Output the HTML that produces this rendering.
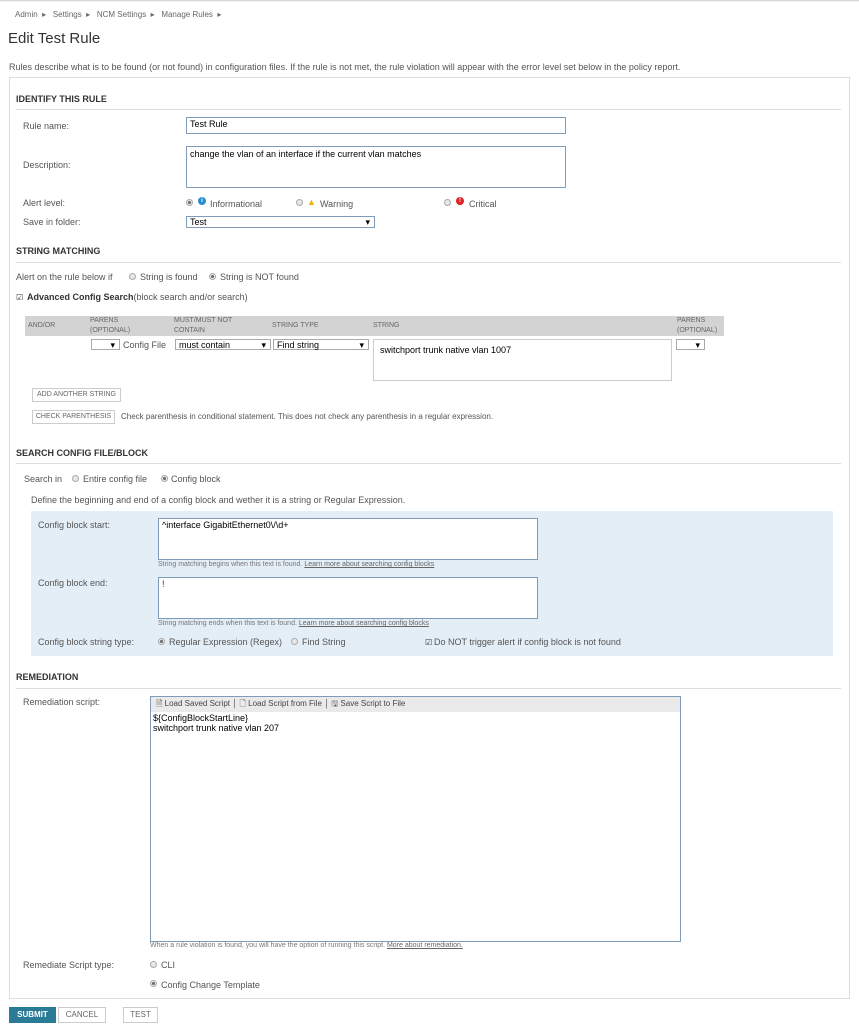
<!DOCTYPE html>
<html><head><meta charset="utf-8"><style>
*{margin:0;padding:0;box-sizing:border-box}
body{width:859px;height:1036px;background:#fff;position:relative;overflow:hidden;font-family:"Liberation Sans",sans-serif;color:#555;font-size:9px}
.a{position:absolute;white-space:nowrap;line-height:12px}
.h{font-weight:bold;color:#333;font-size:9px}
.ln{position:absolute;height:1px;background:#ddd;left:16px;width:825px}
.in{position:absolute;border:1px solid #7f9db9;background:#fff;color:#000;font-size:9px;padding:1px 3px;line-height:11px}
.ta{position:absolute;border:1px solid #ccc;background:#fff;color:#000;font-size:9px;padding:5px 6px}
.sel{position:absolute;border:1px solid #aaa;background:#fff;color:#000;font-size:9px;line-height:10px;padding:0 3px}
.sel:after{content:"▾";position:absolute;right:4px;top:0;font-size:9px;color:#000}
.r{position:absolute;width:7px;height:7px;border-radius:50%;border:1px solid #aaa;background:#e8e8e8}
.r.on:after{content:"";position:absolute;left:1px;top:1px;width:3px;height:3px;border-radius:50%;background:#666}
.btn{position:absolute;border:1px solid #ccc;background:#fff;color:#666;font-size:7px;text-align:center;line-height:12px}
.hint{font-size:7px;color:#777}
.hint u{color:#666}
</style></head><body>
<div style="position:absolute;left:0;top:0;width:859px;height:2px;background:linear-gradient(#ccc,#fff)"></div>
<div class="a" style="left:15px;top:9px;font-size:8px;color:#666">Admin &nbsp;▸ &nbsp;&nbsp;Settings &nbsp;▸ &nbsp;&nbsp;NCM Settings &nbsp;▸ &nbsp;&nbsp;Manage Rules &nbsp;▸</div>
<div class="a" style="left:8px;top:30px;font-size:15px;line-height:18px;color:#333">Edit Test Rule</div>
<div class="a" style="left:9px;top:61px">Rules describe what is to be found (or not found) in configuration files. If the rule is not met, the rule violation will appear with the error level set below in the policy report.</div>
<div style="position:absolute;left:9px;top:77px;width:841px;height:922px;border:1px solid #ddd"></div>

<div class="a h" style="left:16px;top:93px">IDENTIFY THIS RULE</div>
<div class="ln" style="top:109px"></div>
<div class="a" style="left:23px;top:120px">Rule name:</div>
<div class="in" style="left:186px;top:117px;width:380px;height:17px">Test Rule</div>
<div class="a" style="left:23px;top:159px">Description:</div>
<div class="in" style="left:186px;top:146px;width:380px;height:42px;padding:2px 3px">change the vlan of an interface if the current vlan matches</div>
<div class="a" style="left:23px;top:197px">Alert level:</div>
<div class="r on" style="left:186px;top:199px"></div>
<div style="position:absolute;left:198px;top:197px;width:8px;height:8px;border-radius:50%;background:#2a8fd0;color:#fff;font-size:6px;text-align:center;line-height:8px;font-weight:bold">i</div>
<div class="a" style="left:210px;top:198px">Informational</div>
<div class="r" style="left:296px;top:199px"></div>
<div class="a" style="left:307px;top:196px;color:#e8b400;font-size:9px">▲</div>
<div class="a" style="left:320px;top:198px">Warning</div>
<div class="r" style="left:444px;top:199px"></div>
<div style="position:absolute;left:456px;top:197px;width:8px;height:8px;border-radius:50%;background:#d22;color:#fff;font-size:6px;text-align:center;line-height:8px;font-weight:bold">!</div>
<div class="a" style="left:469px;top:198px">Critical</div>
<div class="a" style="left:23px;top:216px">Save in folder:</div>
<div class="sel" style="left:186px;top:216px;width:189px;height:12px;border-color:#7f9db9;line-height:10px">Test</div>

<div class="a h" style="left:16px;top:245px">STRING MATCHING</div>
<div class="ln" style="top:262px"></div>
<div class="a" style="left:16px;top:271px">Alert on the rule below if</div>
<div class="r" style="left:129px;top:273px"></div>
<div class="a" style="left:140px;top:271px">String is found</div>
<div class="r on" style="left:209px;top:273px"></div>
<div class="a" style="left:220px;top:271px">String is NOT found</div>
<div class="a" style="left:16px;top:292px;font-size:8px;color:#333">☑</div>
<div class="a" style="left:27px;top:291px"><b style="color:#333">Advanced Config Search</b>(block search and/or search)</div>

<div style="position:absolute;left:25px;top:316px;width:699px;height:20px;background:#d3d3d3"></div>
<div class="a" style="left:28px;top:320px;font-size:7px;color:#666">AND/OR</div>
<div class="a" style="left:90px;top:316px;font-size:7px;color:#666;line-height:10px">PARENS<br>(OPTIONAL)</div>
<div class="a" style="left:174px;top:316px;font-size:7px;color:#666;line-height:10px">MUST/MUST NOT<br>CONTAIN</div>
<div class="a" style="left:272px;top:320px;font-size:7px;color:#666">STRING TYPE</div>
<div class="a" style="left:373px;top:320px;font-size:7px;color:#666">STRING</div>
<div class="a" style="left:677px;top:316px;font-size:7px;color:#666;line-height:10px">PARENS<br>(OPTIONAL)</div>
<div class="sel" style="left:91px;top:339px;width:29px;height:11px"></div>
<div class="a" style="left:123px;top:339px">Config File</div>
<div class="sel" style="left:175px;top:339px;width:96px;height:11px">must contain</div>
<div class="sel" style="left:273px;top:339px;width:96px;height:11px">Find string</div>
<div class="ta" style="left:373px;top:339px;width:299px;height:42px">switchport trunk native vlan 1007</div>
<div class="sel" style="left:676px;top:339px;width:29px;height:11px"></div>
<div class="btn" style="left:32px;top:388px;width:89px;height:14px">ADD ANOTHER STRING</div>
<div class="btn" style="left:32px;top:410px;width:83px;height:14px">CHECK PARENTHESIS</div>
<div class="a" style="left:121px;top:411px;font-size:8px">Check parenthesis in conditional statement. This does not check any parenthesis in a regular expression.</div>

<div class="a h" style="left:16px;top:447px">SEARCH CONFIG FILE/BLOCK</div>
<div class="ln" style="top:463px"></div>
<div class="a" style="left:24px;top:473px">Search in</div>
<div class="r" style="left:72px;top:475px"></div>
<div class="a" style="left:83px;top:473px">Entire config file</div>
<div class="r on" style="left:161px;top:475px"></div>
<div class="a" style="left:171px;top:473px">Config block</div>
<div class="a" style="left:31px;top:494px">Define the beginning and end of a config block and wether it is a string or Regular Expression.</div>
<div style="position:absolute;left:31px;top:511px;width:802px;height:145px;background:#e3eef7"></div>
<div class="a" style="left:38px;top:519px">Config block start:</div>
<div class="in" style="left:158px;top:518px;width:380px;height:42px">^interface GigabitEthernet0\/\d+</div>
<div class="a hint" style="left:158px;top:559px">String matching begins when this text is found. <u>Learn more about searching config blocks</u></div>
<div class="a" style="left:38px;top:577px">Config block end:</div>
<div class="in" style="left:158px;top:577px;width:380px;height:42px;color:#808">!</div>
<div class="a hint" style="left:158px;top:618px">String matching ends when this text is found. <u>Learn more about searching config blocks</u></div>
<div class="a" style="left:38px;top:636px">Config block string type:</div>
<div class="r on" style="left:158px;top:638px"></div>
<div class="a" style="left:169px;top:636px">Regular Expression (Regex)</div>
<div class="r" style="left:291px;top:638px"></div>
<div class="a" style="left:302px;top:636px">Find String</div>
<div class="a" style="left:425px;top:637px;font-size:8px;color:#333">☑</div>
<div class="a" style="left:434px;top:636px">Do NOT trigger alert if config block is not found</div>

<div class="a h" style="left:16px;top:671px">REMEDIATION</div>
<div class="ln" style="top:688px"></div>
<div class="a" style="left:23px;top:696px">Remediation script:</div>
<div style="position:absolute;left:150px;top:696px;width:531px;height:246px;border:1px solid #7f9db9;background:#fff"></div>
<div style="position:absolute;left:151px;top:697px;width:529px;height:15px;background:#eaeaea"></div>
<div class="a" style="left:156px;top:698px;font-size:8px;color:#444">🗎 Load Saved Script │ 🗋 Load Script from File │ 🖫 Save Script to File</div>
<div class="a" style="left:153px;top:713px;color:#000;line-height:10px">${ConfigBlockStartLine}<br>switchport trunk native vlan 207</div>
<div class="a hint" style="left:150px;top:940px">When a rule violation is found, you will have the option of running this script. <u>More about remediation.</u></div>
<div class="a" style="left:23px;top:959px">Remediate Script type:</div>
<div class="r" style="left:150px;top:961px"></div>
<div class="a" style="left:161px;top:959px">CLI</div>
<div class="r on" style="left:150px;top:980px"></div>
<div class="a" style="left:161px;top:979px">Config Change Template</div>

<div style="position:absolute;left:9px;top:1007px;width:47px;height:16px;background:#2a7b96;color:#fff;font-size:8px;font-weight:bold;text-align:center;line-height:16px">SUBMIT</div>
<div class="btn" style="left:58px;top:1007px;width:48px;height:16px;line-height:14px;font-size:8px">CANCEL</div>
<div class="btn" style="left:123px;top:1007px;width:35px;height:16px;line-height:14px;font-size:8px">TEST</div>
</body></html>
